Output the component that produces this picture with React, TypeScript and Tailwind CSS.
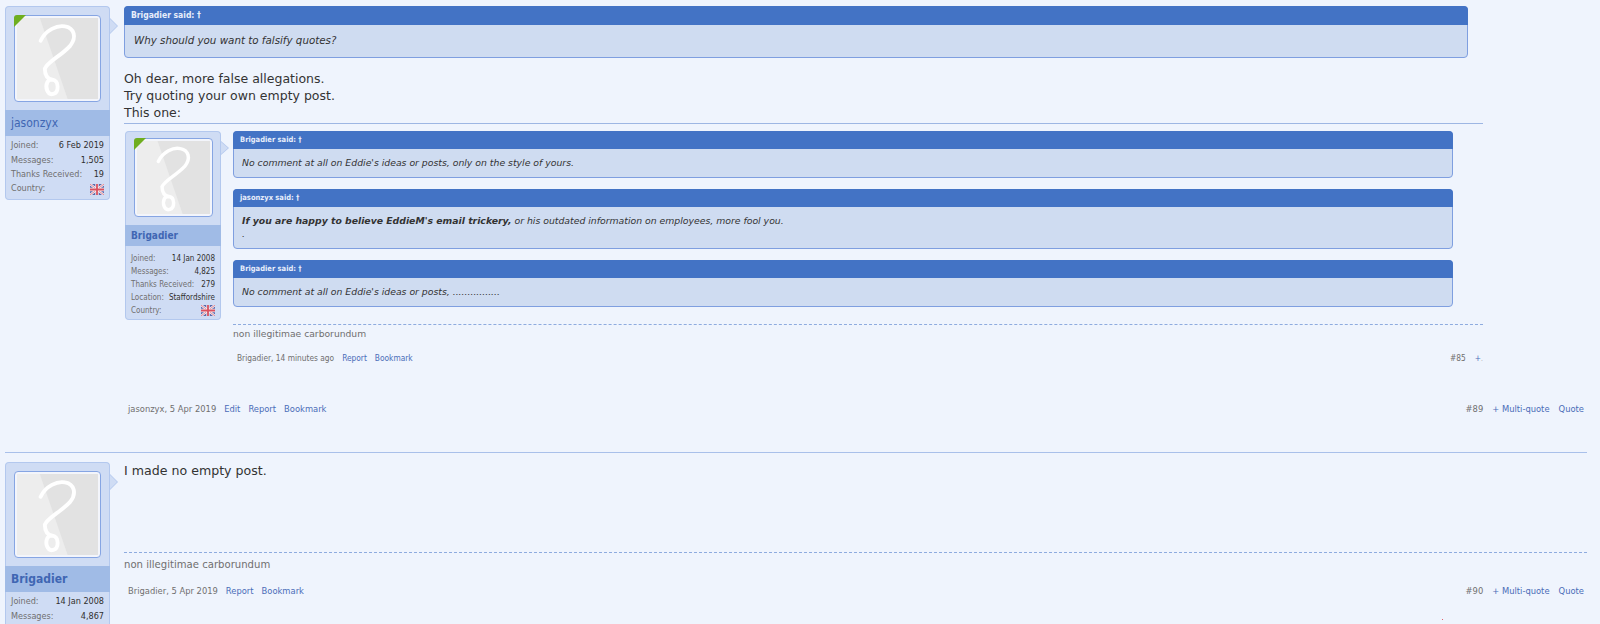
const BODY = "font-['DejaVu_Sans',Verdana,sans-serif]";
const NARROW = "font-['DejaVu_Sans_Condensed','DejaVu_Sans',sans-serif]";

function Flag() {
  return (
    <svg width="14" height="11" viewBox="0 0 14 11">
      <rect width="14" height="11" fill="#5a69ad" />
      <path d="M0 0L14 11M14 0L0 11" stroke="#f4eef2" strokeWidth="2.4" />
      <path d="M0 0L14 11M14 0L0 11" stroke="#dd6a78" strokeWidth="0.8" />
      <path d="M7 0V11M0 5.5H14" stroke="#f4eef2" strokeWidth="3.4" />
      <path d="M7 0V11M0 5.5H14" stroke="#d9505f" strokeWidth="1.8" />
    </svg>
  );
}

function Avatar({ size, corner }: { size: number; corner?: boolean }) {
  return (
    <div className="relative rounded-[4px] border border-[#86a5e3] bg-[#f3f5fb] p-[2px]" style={{ width: size, height: size }}>
      <svg viewBox="0 0 96 96" className="block h-full w-full">
        <rect width="96" height="96" fill="#ededed" />
        <path d="M27 0H96V96H60Z" fill="#e2e2e2" />
        <path
          d="M28 27C34 14 48 8 57 10C68 12 71 23 63 33C52 45 36 52 33 60C33 67 35 72 42 73C50 74 50 88 43 90C36 92 33 82 36 76C37 74 40 73 42 73"
          fill="none"
          stroke="#fff"
          strokeWidth="4.6"
          strokeLinecap="round"
        />
      </svg>
      {corner && (
        <svg width="12" height="12" viewBox="0 0 12 12" className="absolute -left-px -top-px">
          <path d="M0 3Q0 0 3 0H12L0 12Z" fill="#6fae1f" />
        </svg>
      )}
    </div>
  );
}

function Stat({ label, value, small, flag }: { label: string; value?: string; small?: boolean; flag?: boolean }) {
  return (
    <div className={`flex items-center justify-between whitespace-nowrap ${small ? 'h-[13px]' : 'h-[14.3px]'}`}>
      <span className="text-[#706f6f]">{label}</span>
      {flag ? <Flag /> : <span className="text-[#2f2f2f]">{value}</span>}
    </div>
  );
}

function Sidebar({ name, stats, corner, small, thinName }: {
  name: string;
  stats: { label: string; value?: string; flag?: boolean }[];
  corner?: boolean;
  small?: boolean;
  thinName?: boolean;
}) {
  return (
    <div className={`relative shrink-0 ${NARROW} ${small ? 'w-[96px]' : 'w-[105px]'}`}>
      <div className={`rounded-t-[4px] border border-b-0 border-[#b3c8ee] bg-[#cfdcf4] ${small ? 'px-[8px] pb-[8px] pt-[6px]' : 'p-[8px]'}`}>
        <Avatar size={small ? 79 : 87} corner={corner} />
      </div>
      <div className={`bg-[#a0bbe6] px-[6px] text-[#3f66b3] ${thinName ? 'font-normal' : 'font-bold'} ${small ? 'py-[3px] text-[10px]' : 'py-[4px] text-[12px]'}`}>
        {name}
      </div>
      <div className={`rounded-b-[4px] border border-t-0 border-[#b3c8ee] bg-[#cfdcf4] px-[5px] ${small ? 'pb-[2px] pt-[6px] text-[8px]' : 'pb-[3px] pt-[3px] text-[9px]'}`}>
        {stats.map((s) => (
          <Stat key={s.label} {...s} small={small} />
        ))}
      </div>
      {/* pointer */}
      <div className={`absolute -right-[8px] w-[8px] bg-[#b3c8ee] [clip-path:polygon(0_0,100%_50%,0_100%)] ${small ? 'top-[10px] h-[14px]' : 'top-[12px] h-[16px]'}`} />
      <div className={`absolute -right-[7px] w-[7px] bg-[#cfdcf4] [clip-path:polygon(0_0,100%_50%,0_100%)] ${small ? 'top-[11px] h-[12px]' : 'top-[13px] h-[14px]'}`} />
    </div>
  );
}

function Quote({ who, small, children }: { who: string; small?: boolean; children: React.ReactNode }) {
  return (
    <div className="rounded-[4px] border border-[#7f9fe0] bg-[#cfdcf1]">
      <div className={`-mx-px -mt-px rounded-t-[4px] bg-[#4373c5] px-[7px] font-bold text-[#e8eefb] ${NARROW} ${small ? 'h-[18px] text-[7.5px] leading-[18px]' : 'h-[19px] text-[8.5px] leading-[19px]'}`}>
        {who} said: †
      </div>
      <div className={`italic text-[#333] ${small ? 'px-[8px] pb-[8px] pt-[7px] text-[9.3px] leading-[13px]' : 'px-[9px] pb-[9px] pt-[8px] text-[10.3px] leading-[15px]'}`}>
        {children}
      </div>
    </div>
  );
}

function Footer({ meta, links, num, small, right }: { meta: string; links: string[]; num: string; small?: boolean; right: string[] }) {
  return (
    <div className={`flex items-center justify-between pl-[4px] ${NARROW} ${small ? 'text-[8.3px]' : 'pr-[3px] text-[9.3px]'}`}>
      <div className="flex gap-[8px]">
        <span className="text-[#706f6f]">{meta}</span>
        {links.map((l) => (
          <span key={l} className="text-[#4a6cb8]">{l}</span>
        ))}
      </div>
      <div className="flex gap-[9px]">
        <span className="text-[#706f6f]">{num}</span>
        {right.map((l) => (
          <span key={l} className="text-[#4a6cb8]">{l}</span>
        ))}
      </div>
    </div>
  );
}

export default function App() {
  return (
    <div className={`relative h-[624px] w-[1600px] overflow-hidden bg-[#eff4fd] ${BODY} text-[#333]`}>
      {/* Post 89 */}
      <div className="flex h-[452px] gap-[14px] pl-[5px] pr-[13px] pt-[6px]">
        <div>
          <Sidebar
            name="jasonzyx"
            corner
            thinName
            stats={[
              { label: 'Joined:', value: '6 Feb 2019' },
              { label: 'Messages:', value: '1,505' },
              { label: 'Thanks Received:', value: '19' },
              { label: 'Country:', flag: true },
            ]}
          />
        </div>
        <div className="min-w-0 flex-1">
          <div className="w-[1344px]">
            <Quote who="Brigadier">Why should you want to falsify quotes?</Quote>
          </div>
          <div className="mt-[12px] w-[1359px] border-b border-[#9db6e3] pb-[2px] text-[12.5px] leading-[17px]">
            <div>Oh dear, more false allegations.</div>
            <div>Try quoting your own empty post.</div>
            <div>This one:</div>
          </div>
          {/* Quoted post 85 */}
          <div className="mt-[7px] flex w-[1359px] gap-[12px] pl-px">
            <Sidebar
              small
              name="Brigadier"
              corner
              stats={[
                { label: 'Joined:', value: '14 Jan 2008' },
                { label: 'Messages:', value: '4,825' },
                { label: 'Thanks Received:', value: '279' },
                { label: 'Location:', value: 'Staffordshire' },
                { label: 'Country:', flag: true },
              ]}
            />
            <div className="min-w-0 flex-1">
              <div className="flex w-[1220px] flex-col gap-[11px]">
                <Quote small who="Brigadier">No comment at all on Eddie's ideas or posts, only on the style of yours.</Quote>
                <Quote small who="jasonzyx">
                  <div><b>If you are happy to believe EddieM's email trickery,</b> or his outdated information on employees, more fool you.</div>
                  <div>.</div>
                </Quote>
                <Quote small who="Brigadier">No comment at all on Eddie's ideas or posts, ................</Quote>
              </div>
              <div className="mt-[17px] border-t border-dashed border-[#8eabdf] pt-[2px] text-[9.2px] leading-[13px] text-[#706f6f]">
                non illegitimae carborundum
              </div>
              <div className="mt-[12px] flex items-center">
                <div className="flex-1">
                  <Footer small meta="Brigadier, 14 minutes ago" links={['Report', 'Bookmark']} num="#85" right={['+']} />
                </div>
                <span className="text-[6px] text-[#999]">.</span>
              </div>
            </div>
          </div>
          <div className="mt-[38px]">
            <Footer meta="jasonzyx, 5 Apr 2019" links={['Edit', 'Report', 'Bookmark']} num="#89" right={['+ Multi-quote', 'Quote']} />
          </div>
        </div>
      </div>

      <div className="ml-[5px] w-[1582px] border-t border-[#a9c0ea]" />

      {/* Post 90 */}
      <div className="flex gap-[14px] pl-[5px] pr-[13px] pt-[9px]">
        <div>
          <Sidebar
            name="Brigadier"
            stats={[
              { label: 'Joined:', value: '14 Jan 2008' },
              { label: 'Messages:', value: '4,867' },
            ]}
          />
        </div>
        <div className="min-w-0 flex-1">
          <div className="h-[90px] text-[12.6px] leading-[17px]">I made no empty post.</div>
          <div className="border-t border-dashed border-[#8eabdf] pt-[5px] text-[10.1px] leading-[14px] text-[#706f6f]">
            non illegitimae carborundum
          </div>
          <div className="mt-[12px]">
            <Footer meta="Brigadier, 5 Apr 2019" links={['Report', 'Bookmark']} num="#90" right={['+ Multi-quote', 'Quote']} />
          </div>
        </div>
      </div>

      {/* stray speck in the screenshot */}
      <div className="absolute left-[1442px] top-[619px] h-px w-px bg-[#e0606a]" />
    </div>
  );
}
